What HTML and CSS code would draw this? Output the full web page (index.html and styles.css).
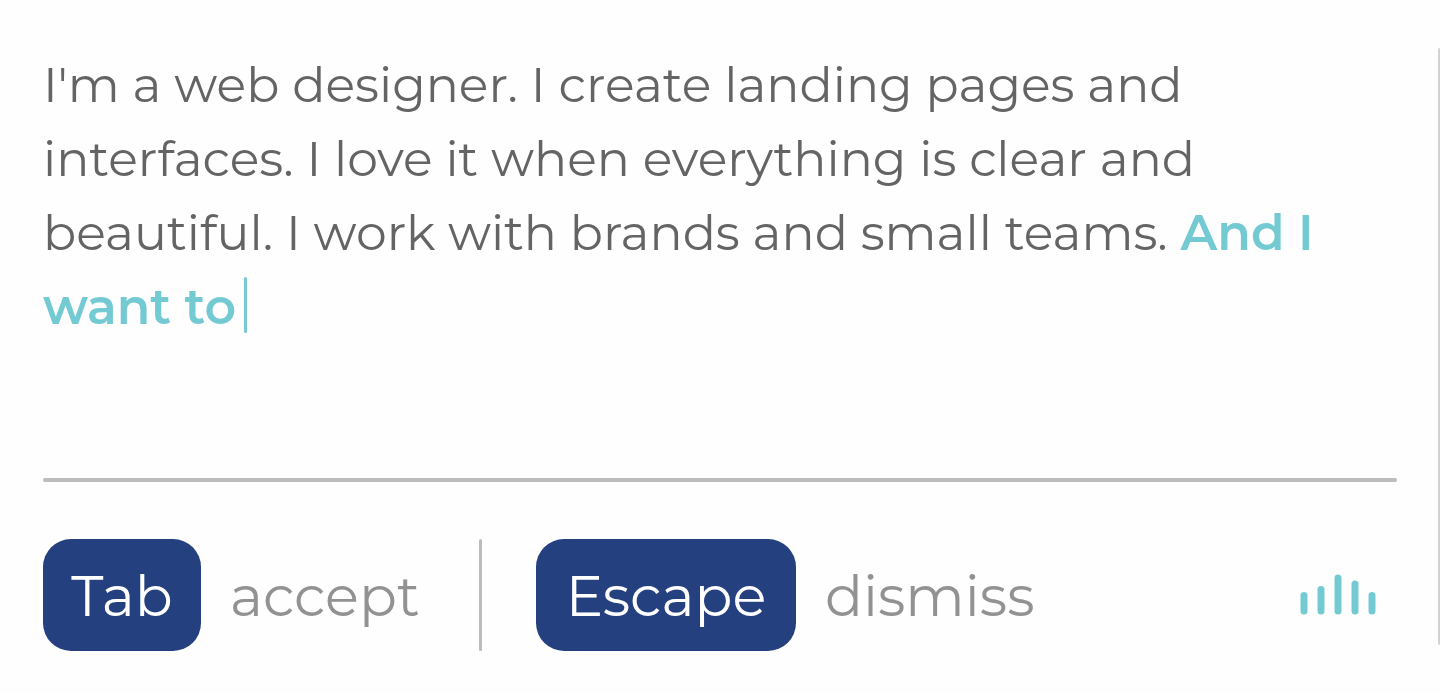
FILE: index.html
```html
<!DOCTYPE html>
<html lang="en">

<head>
  <meta charset="UTF-8">
  <meta name="viewport" content="width=device-width, initial-scale=1.0">
  <title>Autocomplete</title>

  <link rel="stylesheet" href="styles.css">
</head>

<body>
<main class="card">
  <div class="editor" role="textbox" aria-multiline="true" aria-label="About me" contenteditable="true" spellcheck="false">I'm a web designer. I create landing pages and<br>
    interfaces. I love it when everything is clear and<br>
    beautiful. I work with brands and small teams. <span class="suggestion">And I<br>
    want to<span class="caret"></span></span></div>

  <hr>

  <div class="actions">
    <button id="accept" class="key" type="button">Tab</button>
    <label class="hint" for="accept">accept</label>
    <span class="divider"></span>
    <button id="dismiss" class="key wide" type="button">Escape</button>
    <label class="hint" for="dismiss">dismiss</label>

    <svg class="voice" width="78" height="42" viewBox="0 0 78 42" fill="none" stroke="#74cad3" stroke-width="7" stroke-linecap="round" aria-hidden="true">
      <path d="M4 21.5V37M21 15.5V37M38 4V37M55 10V37M72 21.5V37"/>
    </svg>
  </div>
</main>
</body>

</html>
```
FILE: styles.css
```css
html {
  --blue: #25407f;
  --teal: #74cad3;
  --text: #646464;
  --gray: #929292;
  --line: #bcbcbc;
  --font: Montserrat, Inter, "Open Sans", sans-serif;
}

* {
  box-sizing: border-box;
}

body {
  margin: 0;
  background-color: #fefefe;
  font-family: var(--font);
  font-weight: 400;
}

.card {
  position: relative;
  min-height: 100vh;
  padding: 48px 43px 42px;
}

/* edge of the card on the right */
.card::after {
  content: "";
  position: absolute;
  top: 48px;
  right: 0;
  bottom: 48px;
  width: 2px;
  border-radius: 2px 0 0 2px;
  background-color: #d2d2d2;
}

.editor {
  min-height: 430px;
  color: var(--text);
  font-size: 49px;
  line-height: 74px;
  outline: none;
}

.suggestion {
  color: var(--teal);
  font-weight: 600;
}

.caret {
  display: inline-block;
  width: 3px;
  height: 56px;
  margin-left: 8px;
  border-radius: 2px;
  background-color: var(--teal);
  vertical-align: -9px;
}

hr {
  height: 4px;
  margin: 0 0 57px;
  border: 0;
  border-radius: 2px;
  background-color: var(--line);
}

.actions {
  display: flex;
  align-items: center;
  height: 112px;
}

.key {
  min-width: 158px;
  height: 112px;
  padding: 2px 0 0;
  border: 0;
  border-radius: 28px;
  background-color: var(--blue);
  color: #fff;
  font: inherit;
  font-size: 56px;
  cursor: pointer;
}

.key.wide {
  min-width: 260px;
}

.hint {
  min-width: 194px;
  padding-top: 2px;
  margin-left: 29px;
  margin-right: 1px;
  color: var(--gray);
  font-size: 56px;
}

.divider {
  width: 3px;
  height: 112px;
  margin: 0 54px;
  border-radius: 2px;
  background-color: var(--line);
}

.voice {
  margin-left: auto;
  margin-right: 19px;
}
```
